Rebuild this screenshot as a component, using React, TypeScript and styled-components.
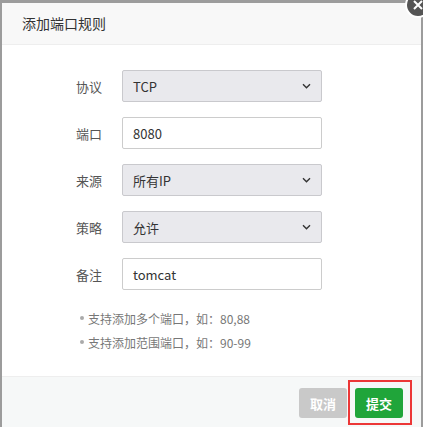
import React from 'react';
import styled, { createGlobalStyle } from 'styled-components';

const GlobalStyle = createGlobalStyle`
  html, body {
    margin: 0;
    padding: 0;
    background: #9c9c9c;
    overflow: hidden;
  }
  body {
    font-family: "Microsoft YaHei", "Noto Sans CJK SC", "Noto Sans", sans-serif;
  }
`;

const Overlay = styled.div`
  width: 423px;
  height: 427px;
  padding: 3px 2px 0 2px;
  box-sizing: border-box;
  overflow: hidden;
`;

const Dialog = styled.div`
  position: relative;
  width: 419px;
  height: 424px;
  display: flex;
  flex-direction: column;
  background: #fff;
`;

const Header = styled.div`
  height: 41px;
  line-height: 41px;
  padding-left: 20px;
  font-size: 14px;
  color: #333;
  background: #f8f8f8;
  border-bottom: 1px solid #eee;
`;

const CloseButton = styled.div`
  position: absolute;
  top: -11px;
  right: -10px;
  width: 22px;
  height: 22px;
  border-radius: 50%;
  border: 2px solid #fff;
  background: #555;
  display: flex;
  align-items: center;
  justify-content: center;
`;

const Body = styled.div`
  flex: 1;
  padding: 25px 0 0 20px;
`;

const Row = styled.div`
  display: flex;
  align-items: center;
  gap: 20px;
  margin-bottom: 15px;
`;

const Label = styled.div`
  width: 80px;
  text-align: right;
  font-size: 13px;
  color: #555;
`;

const Field = styled.div<{ $select?: boolean }>`
  width: 200px;
  height: 32px;
  box-sizing: border-box;
  display: flex;
  align-items: center;
  justify-content: space-between;
  padding: 0 10px;
  font-size: 13px;
  color: #333;
  border: 1px solid ${p => (p.$select ? '#c9c9cd' : '#ccc')};
  border-radius: 2px;
  background: ${p => (p.$select ? '#e9e9ed' : '#fff')};
`;

const Hints = styled.ul`
  list-style: none;
  margin: 16px 0 0 58px;
  padding: 0;
`;

const Hint = styled.li`
  display: flex;
  align-items: center;
  gap: 4px;
  height: 24px;
  font-size: 12px;
  color: #777;

  &::before {
    content: '';
    width: 4px;
    height: 4px;
    border-radius: 50%;
    background: #aaa;
  }
`;

const Footer = styled.div`
  height: 51px;
  box-sizing: border-box;
  padding: 11px 18px 0 0;
  display: flex;
  align-items: flex-start;
  justify-content: flex-end;
  gap: 8px;
  background: #f6f8f8;
  border-top: 1px solid #eee;
`;

const Button = styled.button<{ $primary?: boolean }>`
  display: block;
  height: 30px;
  width: 48px;
  padding: 0;
  border: none;
  border-radius: 3px;
  font-family: inherit;
  font-size: 13px;
  font-weight: bold;
  color: #fff;
  background: ${p => (p.$primary ? '#20a53a' : '#c9c9c9')};
`;

const Marked = styled.span`
  position: relative;
  display: block;

  &::after {
    content: '';
    position: absolute;
    top: -8px;
    left: -7px;
    right: -9px;
    bottom: -7px;
    border: 2px solid #ec3737;
    pointer-events: none;
  }
`;

const Chevron = () => (
  <svg width="9" height="6" viewBox="0 0 9 6">
    <path d="M1 1.2l3.5 3.5L8 1.2" fill="none" stroke="#333" strokeWidth="1.4" />
  </svg>
);

const rows = [
  { label: '协议', value: 'TCP', select: true },
  { label: '端口', value: '8080', select: false },
  { label: '来源', value: '所有IP', select: true },
  { label: '策略', value: '允许', select: true },
  { label: '备注', value: 'tomcat', select: false },
];

const App = () => (
  <>
    <GlobalStyle />
    <Overlay>
      <Dialog>
        <Header>添加端口规则</Header>
        <CloseButton>
          <svg width="10" height="10" viewBox="0 0 10 10">
            <path d="M1 1l8 8M9 1l-8 8" stroke="#fff" strokeWidth="2" />
          </svg>
        </CloseButton>
        <Body>
          {rows.map(r => (
            <Row key={r.label}>
              <Label>{r.label}</Label>
              <Field $select={r.select}>
                <span>{r.value}</span>
                {r.select && <Chevron />}
              </Field>
            </Row>
          ))}
          <Hints>
            <Hint>支持添加多个端口，如：80,88</Hint>
            <Hint>支持添加范围端口，如：90-99</Hint>
          </Hints>
        </Body>
        <Footer>
          <Button>取消</Button>
          <Marked>
            <Button $primary>提交</Button>
          </Marked>
        </Footer>
      </Dialog>
    </Overlay>
  </>
);

export default App;
